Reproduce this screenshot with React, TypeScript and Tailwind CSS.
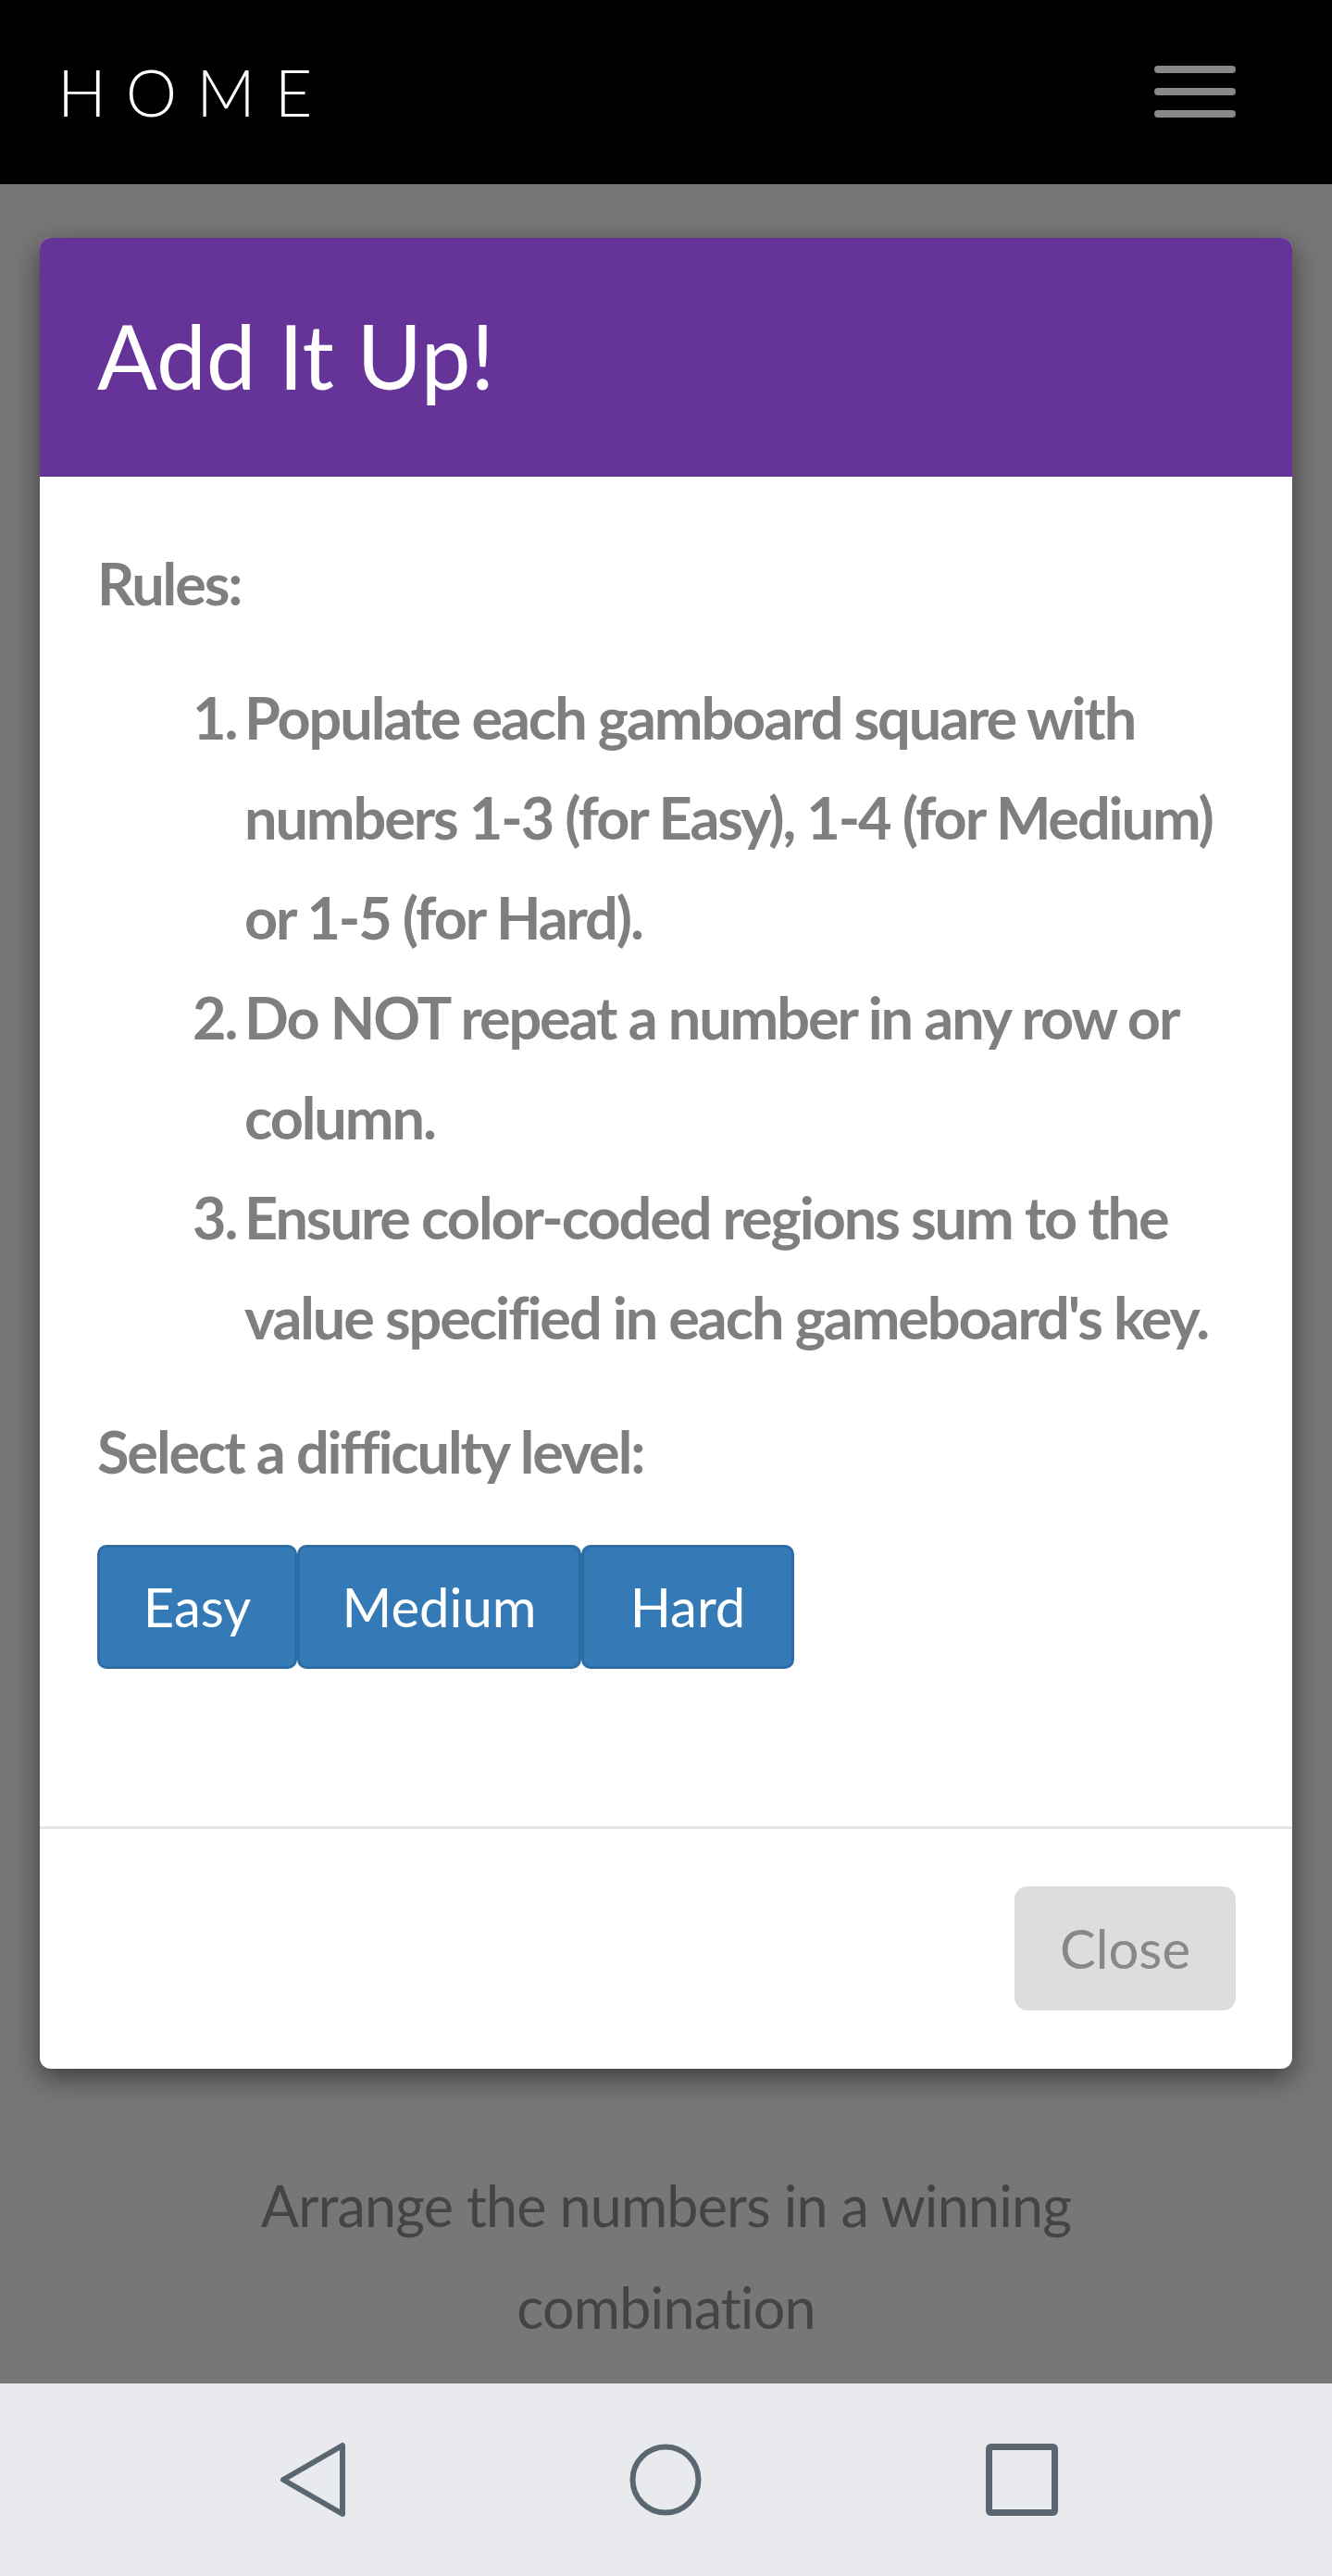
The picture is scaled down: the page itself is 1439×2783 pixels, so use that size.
import React from "react"

const rules = [
  ["1.", ["Populate each gamboard square with", "numbers 1-3 (for Easy), 1-4 (for Medium)", "or 1-5 (for Hard)."]],
  ["2.", ["Do NOT repeat a number in any row or", "column."]],
  ["3.", ["Ensure color-coded regions sum to the", "value specified in each gameboard's key."]],
] as const

const levels = [
  { label: "Easy", w: "w-[216px]" },
  { label: "Medium", w: "w-[307px]" },
  { label: "Hard", w: "w-[230px]" },
]

function NavBar() {
  return (
    <div className="flex h-[208px] items-center gap-[305px] bg-[#e8eaed] pl-[301px]">
      <svg width="73" height="82" viewBox="0 0 73 82" fill="none" stroke="#5b6770" strokeWidth="6" strokeLinejoin="round">
        <path d="M69 4 L69 78 L5 41 Z" />
      </svg>
      <svg width="80" height="80" viewBox="0 0 80 80" fill="none" stroke="#5b6770" strokeWidth="6">
        <circle cx="40" cy="40" r="35.5" />
      </svg>
      <svg width="80" height="80" viewBox="0 0 80 80" fill="none" stroke="#5b6770" strokeWidth="7">
        <rect x="4.5" y="4.5" width="71" height="71" rx="2" />
      </svg>
    </div>
  )
}

export default function App() {
  return (
    <div className="flex h-[2783px] w-[1439px] flex-col bg-[#777777] font-['Lato','Liberation_Sans',sans-serif]">
      <header className="flex h-[199px] shrink-0 items-center justify-between bg-black pl-[62px] pr-[104px]">
        <span className="mt-[-2px] text-[70px] font-light leading-none tracking-[0.3em] text-white">HOME</span>
        <div className="flex w-[88px] flex-col gap-[16px] pb-[2px]">
          <span className="h-[8px] rounded-full bg-[#888888]" />
          <span className="h-[8px] rounded-full bg-[#888888]" />
          <span className="h-[8px] rounded-full bg-[#888888]" />
        </div>
      </header>

      <main className="flex flex-1 flex-col">
        <section className="mx-[43px] mt-[58px] overflow-hidden rounded-[12px] bg-white shadow-[0_10px_30px_rgba(0,0,0,0.5)]">
          <div className="flex h-[258px] items-center bg-[#663399] pl-[62px]">
            <h1 className="mt-[-4px] text-[96px] font-normal leading-none text-white">Add It Up!</h1>
          </div>

          <div className="px-[62px] pt-[61px] pb-[170px] text-[63px] font-bold leading-[108px] tracking-[-2.1px] text-[#7f7f7f]">
            <p className="mb-[37px]">Rules:</p>
            <ol className="pl-[103px]">
              {rules.map(([num, lines]) => (
                <li key={num} className="flex">
                  <span className="w-[56px] shrink-0">{num}</span>
                  <span className="flex flex-col whitespace-nowrap">
                    {lines.map((l) => (
                      <span key={l}>{l}</span>
                    ))}
                  </span>
                </li>
              ))}
            </ol>
            <p className="mt-[37px]">Select a difficulty level:</p>
            <div className="mt-[47px] flex tracking-normal">
              {levels.map((lv) => (
                <button
                  key={lv.label}
                  className={`${lv.w} h-[134px] rounded-[10px] border-[3px] border-[#2e6da4] bg-[#337ab7] text-[58px] font-normal leading-none text-white`}
                >
                  {lv.label}
                </button>
              ))}
            </div>
          </div>

          <div className="flex justify-end border-t-[3px] border-[#e5e5e5] pt-[62px] pr-[61px] pb-[63px]">
            <button className="h-[134px] w-[239px] rounded-[14px] bg-[#dddddd] text-[58px] font-normal leading-none text-[#888888]">
              Close
            </button>
          </div>
        </section>

        <p className="mx-auto mt-[93px] w-[900px] text-center text-[61px] font-normal leading-[110px] tracking-[-0.8px] text-[#444444]">
          Arrange the numbers in a winning combination
        </p>
      </main>

      <NavBar />
    </div>
  )
}
